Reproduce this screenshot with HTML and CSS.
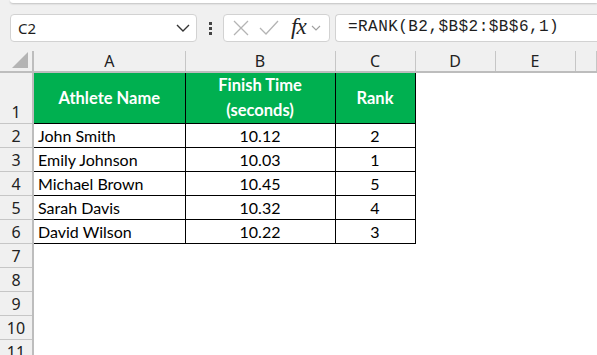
FILE: index.html
```html
<html>

<head>
    <title>RANK</title>
    <link rel="stylesheet" href="styles.css">
</head>

<body>
    <div class="ribbon-edge"></div>
    <div class="formula-bar">
        <div class="name-box">
            <span>C2</span>
            <svg width="14" height="8" viewBox="0 0 14 8"><path d="M1 1 L7 7 L13 1" fill="none" stroke="#333" stroke-width="1.4"/></svg>
        </div>
        <div class="grip"><i></i><i></i><i></i></div>
        <div class="fx-buttons">
            <svg width="16" height="16" viewBox="0 0 16 16"><path d="M1 1 L15 15 M15 1 L1 15" stroke="#b4b4b4" stroke-width="1.3"/></svg>
            <svg width="20" height="16" viewBox="0 0 20 16"><path d="M1 8 L7 14 L19 1" fill="none" stroke="#b4b4b4" stroke-width="1.3"/></svg>
            <span class="fx">fx</span>
            <svg width="10" height="6" viewBox="0 0 10 6"><path d="M1 1 L5 5 L9 1" fill="none" stroke="#a0a0a0" stroke-width="1.1"/></svg>
        </div>
        <div class="formula">=RANK(B2,$B$2:$B$6,1)</div>
    </div>

    <table class="sheet">
        <colgroup>
            <col class="c-rh"><col class="c-a"><col class="c-b"><col class="c-c"><col class="c-d"><col class="c-e"><col>
        </colgroup>
        <tr class="col-heads">
            <th class="corner"><div class="tri"></div></th>
            <th>A</th><th>B</th><th>C</th><th>D</th><th>E</th><th></th>
        </tr>
        <tr class="r-head">
            <th>1</th>
            <td class="hd">Athlete Name</td>
            <td class="hd">Finish Time<br>(seconds)</td>
            <td class="hd">Rank</td>
            <td></td><td></td><td></td>
        </tr>
        <tr><th>2</th><td class="dt">John Smith</td><td class="dt num">10.12</td><td class="dt num">2</td><td></td><td></td><td></td></tr>
        <tr><th>3</th><td class="dt">Emily Johnson</td><td class="dt num">10.03</td><td class="dt num">1</td><td></td><td></td><td></td></tr>
        <tr><th>4</th><td class="dt">Michael Brown</td><td class="dt num">10.45</td><td class="dt num">5</td><td></td><td></td><td></td></tr>
        <tr><th>5</th><td class="dt">Sarah Davis</td><td class="dt num">10.32</td><td class="dt num">4</td><td></td><td></td><td></td></tr>
        <tr><th>6</th><td class="dt">David Wilson</td><td class="dt num">10.22</td><td class="dt num">3</td><td></td><td></td><td></td></tr>
        <tr><th>7</th><td></td><td></td><td></td><td></td><td></td><td></td></tr>
        <tr><th>8</th><td></td><td></td><td></td><td></td><td></td><td></td></tr>
        <tr><th>9</th><td></td><td></td><td></td><td></td><td></td><td></td></tr>
        <tr><th>10</th><td></td><td></td><td></td><td></td><td></td><td></td></tr>
        <tr><th>11</th><td></td><td></td><td></td><td></td><td></td><td></td></tr>
    </table>
</body>

</html>
```

FILE: styles.css
```css
body {
    margin: 0;
    background: #f0f0f0;
    font-family: 'Noto Sans', sans-serif;
    overflow: hidden;
}

.ribbon-edge {
    height: 3px;
    margin-left: 10px;
    background: #fff;
    border-bottom-left-radius: 6px;
    box-shadow: 0 1px 2px rgba(0, 0, 0, 0.2);
}

.formula-bar {
    display: flex;
    align-items: center;
    height: 28px;
    padding: 11px 0 9px 10px;
}

.name-box {
    display: flex;
    align-items: center;
    justify-content: space-between;
    box-sizing: border-box;
    width: 187px;
    height: 28px;
    padding: 0 6px 0 7px;
    background: #fff;
    border: 1px solid #d2d2d2;
    border-radius: 4px;
    font-size: 15px;
    color: #1e1e1e;
}

.grip {
    display: flex;
    flex-direction: column;
    gap: 2px;
    margin: 0 11px 0 12px;
}

.grip i {
    width: 3px;
    height: 3px;
    background: #444;
}

.fx-buttons {
    display: flex;
    align-items: center;
    box-sizing: border-box;
    width: 107px;
    height: 28px;
    padding: 0 0 0 9px;
    background: #fff;
    border: 1px solid #d2d2d2;
    border-radius: 4px;
}

.fx-buttons svg:nth-child(2) {
    margin-left: 10px;
}

.fx {
    margin: 0 5px 2px 12px;
    font-family: 'Liberation Serif', serif;
    font-style: italic;
    font-size: 23px;
    color: #222;
    letter-spacing: -1px;
}

.formula {
    flex: 1;
    box-sizing: border-box;
    height: 28px;
    margin-left: 5px;
    padding: 3px 0 0 12px;
    background: #fff;
    border: 1px solid #d2d2d2;
    border-right: none;
    border-radius: 4px 0 0 4px;
    font-family: 'Liberation Mono', monospace;
    font-size: 16px;
    letter-spacing: 0.45px;
    color: #1e1e1e;
}

.sheet {
    table-layout: fixed;
    border-collapse: collapse;
    background: #fff;
    width: 597px;
}

.c-rh { width: 33px; }
.c-a { width: 152px; }
.c-b { width: 150px; }
.c-c { width: 80px; }
.c-d { width: 80px; }
.c-e { width: 80px; }

.sheet tr {
    height: 24px;
}

.sheet td {
    padding: 0 4px;
    border: none;
    font-family: Lato, sans-serif;
    font-size: 16px;
    color: #000;
    white-space: nowrap;
}

.sheet th {
    padding: 0;
    background: #f0f0f0;
    font-weight: normal;
    font-size: 16px;
    color: #222;
    border-bottom: 1px solid #c6c6c6;
    text-align: center;
    vertical-align: bottom;
    line-height: 22px;
}

.sheet tr.col-heads {
    height: 21px;
}

.col-heads th {
    border-right: 1px solid #c6c6c6;
    border-bottom: 2px solid #bdbdbd;
    vertical-align: middle;
    line-height: 20px;
}

.col-heads th.corner {
    position: relative;
}

.tri {
    position: absolute;
    right: 4px;
    bottom: 3px;
    width: 0;
    height: 0;
    border-left: 16px solid transparent;
    border-bottom: 16px solid #b4b4b4;
}

.sheet tr th:first-child {
    border-right: 2px solid #bdbdbd;
}

.sheet tr.r-head {
    height: 46px;
}

.sheet td.hd {
    background: #00b050;
    color: #fff;
    font-size: 16.5px;
    font-weight: bold;
    text-align: center;
    white-space: normal;
    line-height: 25px;
    border: 1px solid #000;
}

.sheet td.dt {
    border: 1px solid #000;
}

.sheet td.num {
    text-align: center;
}
```
